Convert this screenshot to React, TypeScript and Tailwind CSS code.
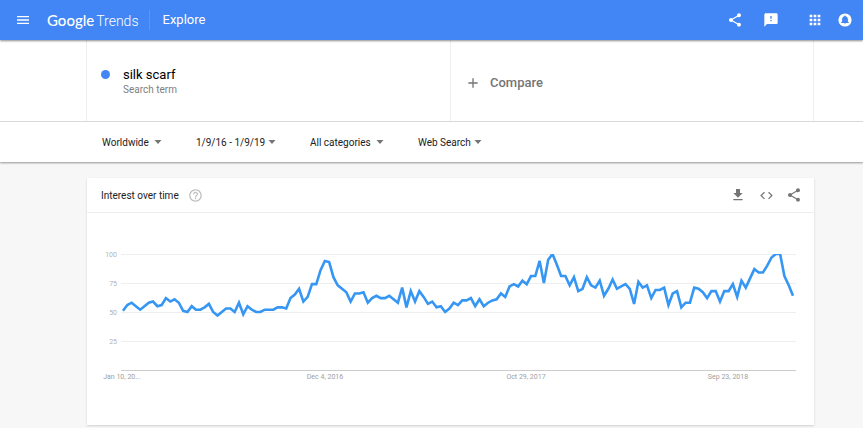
import type { ReactNode } from 'react';
import {
  MdAdd,
  MdApps,
  MdCode,
  MdFeedback,
  MdGetApp,
  MdHelpOutline,
  MdMenu,
  MdShare,
} from 'react-icons/md';

// Weekly interest, Jan 10 2016 to Jan 6 2019
const interest = [
  51, 56, 58, 55, 52, 55, 58, 59, 55, 56, 62, 59, 61, 58, 51, 50, 55, 52, 52, 54,
  57, 50, 47, 50, 53, 53, 50, 58, 48, 55, 52, 50, 50, 52, 52, 52, 54, 54, 53, 62,
  65, 70, 59, 63, 74, 74, 86, 94, 93, 80, 73, 70, 67, 59, 66, 66, 67, 58, 62, 64,
  62, 62, 64, 61, 58, 71, 54, 68, 59, 68, 63, 57, 59, 54, 55, 50, 53, 58, 56, 60,
  60, 62, 55, 61, 55, 58, 60, 61, 66, 63, 72, 74, 72, 77, 74, 81, 81, 94, 75, 95,
  100, 91, 81, 81, 73, 80, 68, 70, 80, 73, 71, 77, 64, 70, 78, 70, 72, 74, 70, 57,
  76, 71, 73, 62, 69, 69, 71, 56, 66, 68, 54, 58, 58, 71, 70, 67, 62, 68, 68, 59,
  68, 68, 74, 63, 77, 71, 79, 87, 84, 84, 90, 97, 100, 100, 81, 73, 64,
];

const TOP = 41;
const BASE = 157;
const FIRST_X = 36;
const LAST_X = 706;

const yOf = (v: number) => BASE - (v / 100) * (BASE - TOP);
const xOf = (i: number) => FIRST_X + (i * (LAST_X - FIRST_X)) / (interest.length - 1);
const line = interest.map((v, i) => `${xOf(i).toFixed(2)},${yOf(v).toFixed(2)}`).join(' ');

const dates = [
  { x: 35, text: 'Jan 10, 20...' },
  { x: 238, text: 'Dec 4, 2016' },
  { x: 439, text: 'Oct 29, 2017' },
  { x: 641, text: 'Sep 23, 2018' },
];

function IconButton({ label, children }: { label: string; children: ReactNode }) {
  return (
    <button type="button" aria-label={label} className="flex size-4 items-center justify-center">
      {children}
    </button>
  );
}

function Filter({ label, value, width }: { label: string; value: string; width: string }) {
  return (
    <div className={`relative ${width}`}>
      <select
        aria-label={label}
        className="block h-6 w-full appearance-none bg-transparent text-[10px] text-[#212121] outline-none"
      >
        <option>{value}</option>
      </select>
      <svg
        viewBox="0 0 8 4"
        className="pointer-events-none absolute top-[10px] right-0 h-1 w-2 fill-[#757575]"
        aria-hidden="true"
      >
        <path d="M0.5 0h7L4 4z" />
      </svg>
    </div>
  );
}

function InterestChart() {
  return (
    <svg
      viewBox="0 0 727 212"
      className="block h-auto w-full"
      role="img"
      aria-label="Interest over time for silk scarf"
    >
      <clipPath id="plot">
        <rect x="33" y="41" width="676" height="117" />
      </clipPath>
      {[100, 75, 50, 25].map((v) => (
        <g key={v}>
          <rect x="34" y={yOf(v)} width="675" height="1" fill="#eeeeee" />
          <text x="30" y={yOf(v) + 3} textAnchor="end" className="fill-[#b3b3b3] text-[7px]">
            {v}
          </text>
        </g>
      ))}
      <rect x="34" y={BASE} width="675" height="1" fill="#cccccc" />
      {dates.map((d) => (
        <text key={d.text} x={d.x} y="166" textAnchor="middle" className="fill-[#9e9e9e] text-[7px]">
          {d.text}
        </text>
      ))}
      <polyline
        points={line}
        fill="none"
        stroke="#3596f3"
        strokeWidth="2.6"
        strokeLinejoin="miter"
        clipPath="url(#plot)"
      />
    </svg>
  );
}

export default function App() {
  return (
    <div className="min-h-screen bg-[#f7f7f7] font-[Roboto,sans-serif] text-[#212121]">
      <header className="relative flex h-10 items-center bg-[#4285f4] pr-[10px] pl-[15px] text-white shadow-[0_1px_2px_rgba(0,0,0,0.45)]">
        <IconButton label="Main menu">
          <MdMenu size={16} />
        </IconButton>
        <a href="#home" className="ml-4 flex items-baseline gap-[2px] leading-5">
          <span className="font-[Lato,sans-serif] text-[15px] font-medium">Google</span>
          <span className="text-[14px] font-light">Trends</span>
        </a>
        <div className="ml-[10px] h-5 w-px bg-[#4f9bf7]" />
        <a href="#explore" className="ml-[13px] text-[13px] leading-5">
          Explore
        </a>
        <div className="ml-auto flex items-center">
          <IconButton label="Share">
            <MdShare size={16} />
          </IconButton>
          <div className="ml-5 flex">
            <IconButton label="Send feedback">
              <MdFeedback size={16} />
            </IconButton>
          </div>
          <div className="ml-7 flex gap-[14px]">
            <IconButton label="Google apps">
              <MdApps size={16} />
            </IconButton>
            <IconButton label="Notifications">
              <svg viewBox="0 0 16 16" className="size-4" aria-hidden="true">
                <circle cx="8" cy="8" r="6.6" fill="#fff" />
                <path
                  d="M8 3.6c-.5 0-.7.3-.7.7C5.8 4.7 5.1 5.9 5.1 7.3V9.5l-1 1v.5h7.8v-.5l-1-1V7.3c0-1.4-.7-2.6-2.2-3 0-.4-.2-.7-.7-.7zM7.2 11.5a.8.8 0 0 0 1.6 0z"
                  fill="#4285f4"
                />
              </svg>
            </IconButton>
          </div>
        </div>
      </header>

      <section className="border-b border-[#e0e0e0] bg-white pr-[49px] pl-[86px]">
        <div className="grid h-[81px] grid-cols-2 border-x border-[#eeeeee]">
          <div className="flex pt-[27px] pl-[14px]">
            <span className="mt-[3px] size-[9px] rounded-full bg-[#4285f4]" />
            <div className="ml-[13px] flex flex-col">
              <input
                id="term"
                defaultValue="silk scarf"
                className="h-4 w-60 bg-transparent text-[13px] leading-4 text-black outline-none"
              />
              <label htmlFor="term" className="text-[10px] leading-[14px] text-[#808080]">
                Search term
              </label>
            </div>
          </div>
          <button
            type="button"
            className="flex items-center gap-[9px] border-l border-[#eeeeee] pt-1 pl-[14px] text-[13px] font-medium text-[#757575]"
          >
            <MdAdd size={16} />
            Compare
          </button>
        </div>
      </section>

      <nav className="relative flex h-10 items-center gap-[34px] bg-white pl-[102px] shadow-[0_1px_2px_rgba(0,0,0,0.4)]">
        <Filter label="Region" value="Worldwide" width="w-[60px]" />
        <Filter label="Time range" value="1/9/16 - 1/9/19" width="w-[80px]" />
        <Filter label="Category" value="All categories" width="w-[74px]" />
        <Filter label="Search type" value="Web Search" width="w-[64px]" />
      </nav>

      <main className="pt-4 pr-[49px] pl-[87px]">
        <section className="bg-white shadow-[0_1px_2px_rgba(0,0,0,0.16)]">
          <div className="flex h-[35px] items-center border-b border-[#eeeeee] pr-3 pl-[14px]">
            <h2 className="pt-px text-[10px] leading-4">Interest over time</h2>
            <div className="ml-[9px] flex text-[#bdbdbd]">
              <IconButton label="Help">
                <MdHelpOutline size={15} />
              </IconButton>
            </div>
            <div className="ml-auto flex gap-3 text-[#757575]">
              <IconButton label="Download">
                <MdGetApp size={16} />
              </IconButton>
              <IconButton label="Embed">
                <MdCode size={15} />
              </IconButton>
              <IconButton label="Share chart">
                <MdShare size={16} />
              </IconButton>
            </div>
          </div>
          <InterestChart />
        </section>
      </main>
    </div>
  );
}
